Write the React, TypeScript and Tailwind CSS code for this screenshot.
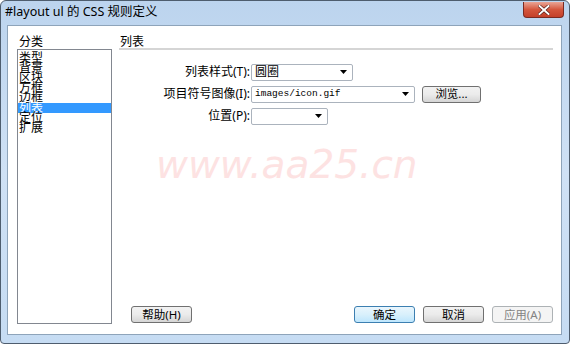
import React from "react";

const categories = ["类型", "背景", "区块", "方框", "边框", "列表", "定位", "扩展"];

function Arrow() {
  return (
    <svg width="7" height="4" viewBox="0 0 7 4" className="shrink-0">
      <path d="M0 0h7L3.5 4z" fill="#000" />
    </svg>
  );
}

function Combo({ width, value, mono }: { width: string; value?: string; mono?: boolean }) {
  return (
    <div
      className={`${width} h-[17px] flex items-center justify-between pl-[3px] pr-[5px] bg-white border border-[#abb3bd] rounded-[2px]`}
    >
      <span
        className={
          mono
            ? "text-[9.5px] font-['Liberation_Mono',monospace] text-black"
            : "text-[12px] text-black"
        }
      >
        {value}
      </span>
      <Arrow />
    </div>
  );
}

function Btn({
  label,
  width = "w-[61px]",
  primary,
  disabled,
}: {
  label: string;
  width?: string;
  primary?: boolean;
  disabled?: boolean;
}) {
  let cls =
    "h-[17px] flex items-center justify-center rounded-[3px] border text-[11.5px] leading-none ";
  if (disabled) cls += "border-[#adb2b5] bg-[#f4f4f4] text-[#838383]";
  else if (primary)
    cls +=
      "border-[#3c7fb1] bg-gradient-to-b from-[#eaf6fd] via-[#d9f0fc] to-[#bee6fd] text-black";
  else cls += "border-[#707070] bg-gradient-to-b from-[#f2f2f2] via-[#ebebeb] to-[#d5d5d5] text-black";
  return <div className={`${width} ${cls}`}>{label}</div>;
}

function Row({ label, children }: { label: string; children: React.ReactNode }) {
  return (
    <div className="flex items-center">
      <div className="w-[132px] text-right text-[12px] text-black pr-[1px]">{label}</div>
      {children}
    </div>
  );
}

export default function App() {
  return (
    <div className="w-[570px] h-[344px] bg-white font-['Noto_Sans','Noto_Sans_CJK_SC',sans-serif] overflow-hidden">
      <div className="relative w-full h-full flex flex-col border border-[#4e5d6e] rounded-t-[6px] rounded-b-[4px] bg-gradient-to-b from-[#bcd4ee] via-[#cfe1f5] to-[#c6dcf3]">
        {/* title bar */}
        <div className="h-[24px] flex items-start justify-between pl-[4px] pr-[5px] shrink-0">
          <div className="text-[12.5px] leading-none pt-[5px] text-black">#layout ul 的 CSS 规则定义</div>
          <div className="mt-[1px] w-[41px] h-[16px] flex items-center justify-center rounded-b-[4px] border border-[#7a2a22] border-t-0 bg-gradient-to-b from-[#e8a495] via-[#d4563d] to-[#c4402a]">
            <svg width="12" height="10" viewBox="0 0 12 10">
              <path d="M1.5 1L10.5 9M10.5 1L1.5 9" stroke="#4a1410" strokeWidth="3.2" strokeLinecap="square" />
              <path d="M1.5 1L10.5 9M10.5 1L1.5 9" stroke="#fff" strokeWidth="2" strokeLinecap="square" />
            </svg>
          </div>
        </div>

        {/* client area */}
        <div className="flex-1 ml-[6px] mr-[7px] mb-[8px] bg-white border border-[#8ea4ba] flex">
          {/* left column */}
          <div className="w-[104px] pl-[9px] pt-[10px] pb-[10px] flex flex-col shrink-0">
            <div className="text-[12px] leading-[12px] text-black pl-[2px] h-[13px]">分类</div>
            <div className="flex-1 border border-[#828790] pt-[3px] overflow-hidden">
              {categories.map((c) => (
                <div
                  key={c}
                  className={`h-[10px] leading-[10px] text-[12px] pl-[1px] overflow-visible ${
                    c === "列表" ? "bg-[#3399ff] text-white" : "text-black"
                  }`}
                >
                  {c}
                </div>
              ))}
            </div>
          </div>

          {/* right column */}
          <div className="flex-1 pl-[7px] pr-[8px] pt-[10px] pb-[11px] flex flex-col">
            <div className="text-[12px] leading-[12px] h-[12px] pl-[1px] text-black">列表</div>
            <div className="h-[2px] bg-[#d5d5d5]" />
            <div className="mt-[13px] flex flex-col gap-[4px]">
              <Row label="列表样式(T):">
                <Combo width="w-[102px]" value="圆圈" />
              </Row>
              <Row label="项目符号图像(I):">
                <Combo width="w-[164px]" value="images/icon.gif" mono />
                <div className="ml-[7px]">
                  <Btn label="浏览..." width="w-[59px]" />
                </div>
              </Row>
              <Row label="位置(P):">
                <Combo width="w-[77px]" />
              </Row>
            </div>
            <div className="flex-1" />
            <div className="flex items-center pl-[12px]">
              <Btn label="帮助(H)" />
              <div className="flex-1" />
              <div className="flex gap-[8px]">
                <Btn label="确定" primary />
                <Btn label="取消" />
                <Btn label="应用(A)" disabled />
              </div>
            </div>
          </div>
        </div>

        {/* watermark */}
        <div className="absolute left-[155px] top-[144px] text-[39px] italic leading-none font-['DejaVu_Sans',sans-serif] text-[#fde2e2] pointer-events-none">
          www.aa25.cn
        </div>
      </div>
    </div>
  );
}
